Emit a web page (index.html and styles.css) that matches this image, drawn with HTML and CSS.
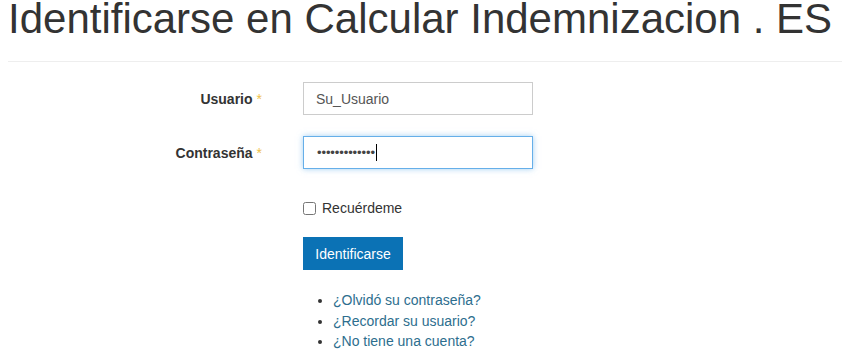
FILE: index.html
```html
<!DOCTYPE html>
<html lang="es">
<head>
    <meta charset="UTF-8" />
    <title>Identificarse</title>
    <link rel="stylesheet" href="styles.css">
</head>
<body>

    <!-- Page heading -->
    <h1 class="page-title">Identificarse en Calcular Indemnizacion . ES</h1>
    <hr class="divider">

    <!-- Login form -->
    <form class="login-form">
        <div class="form-row">
            <label class="form-label" for="username">Usuario<span class="star">*</span></label>
            <input class="form-input" id="username" type="text" value="Su_Usuario">
        </div>
        <div class="form-row">
            <label class="form-label" for="password">Contraseña<span class="star">*</span></label>
            <div class="form-input focused"><span class="dots">•••••••••••••</span><span class="caret"></span></div>
        </div>
        <div class="form-row remember-row">
            <span></span>
            <label class="remember"><input type="checkbox"> Recuérdeme</label>
        </div>
        <div class="form-row">
            <span></span>
            <button class="btn-primary" type="button">Identificarse</button>
        </div>
    </form>

    <ul class="login-links">
        <li><a href="#">¿Olvidó su contraseña?</a></li>
        <li><a href="#">¿Recordar su usuario?</a></li>
        <li><a href="#">¿No tiene una cuenta?</a></li>
    </ul>

</body>
</html>
```

FILE: styles.css
```css
body {
    margin: 0 0 0 8px;
    font-family: "Liberation Sans", Arial, sans-serif;
    font-size: 14px;
    color: #333;
    background: #fff;
}
.page-title {
    margin: 0;
    font-size: 42px;
    font-weight: normal;
    line-height: 38px;
    color: #333;
    white-space: nowrap;
}
.divider {
    margin: 23px 0 20px;
    border: 0;
    border-top: 1px solid #eee;
}
.login-form {
    display: flex;
    flex-direction: column;
    gap: 21px;
}
.form-row {
    display: grid;
    grid-template-columns: 255px 230px;
    column-gap: 40px;
    align-items: center;
}
.form-label {
    text-align: right;
    font-weight: bold;
    color: #333;
    padding-right: 1px;
}
.star {
    color: #f0c14b;
    font-weight: normal;
    margin-left: 4px;
}
.form-input {
    box-sizing: border-box;
    width: 230px;
    height: 33px;
    padding: 6px 12px;
    border: 1px solid #ccc;
    font-family: inherit;
    font-size: 14px;
    color: #555;
    background: #fff;
}
.form-input.focused {
    display: flex;
    align-items: center;
    border-color: #66afe9;
    box-shadow: 0 0 6px rgba(102, 175, 233, 0.6);
    padding-left: 13px;
}
.dots {
    font-size: 13px;
    letter-spacing: -0.1px;
    color: #444;
}
.caret {
    display: inline-block;
    width: 1px;
    height: 17px;
    background: #000;
    margin-left: 1px;
}
.remember-row {
    margin-top: 10px;
}
.remember {
    display: flex;
    align-items: center;
    gap: 6px;
    color: #333;
    font-size: 14px;
}
.remember input {
    margin: 0;
    width: 13px;
    height: 13px;
}
.btn-primary {
    width: 100px;
    height: 33px;
    border: none;
    background: #0b72b5;
    color: #fff;
    font-family: inherit;
    font-size: 14px;
}
.login-links {
    margin: 20px 0 0 325px;
    padding: 0;
    line-height: 20.5px;
    font-size: 14px;
}
.login-links a {
    color: #2d6e8e;
    text-decoration: none;
}
```
